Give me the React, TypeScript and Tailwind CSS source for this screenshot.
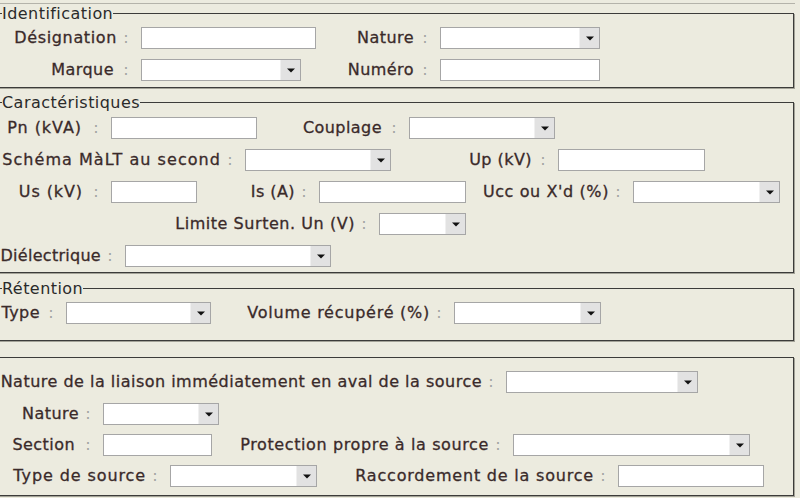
import React from "react";

const FONT = "font-['DejaVu_Sans',sans-serif] text-[16px] tracking-[0.45px]";

function Label({ w, text, t = "", g = "ml-[6px]" }: { w: string; text: string; t?: string; g?: string }) {
  return (
    <span className={`${w} flex shrink-0 justify-end whitespace-nowrap leading-[22px] text-[#3a2a2a] [-webkit-text-stroke:0.3px_#3a2a2a]`}>
      <span className={t}>{text}</span>
      <span className={`${g} mr-[2px] w-[6px] text-center tracking-normal text-[#a3a3a3] [-webkit-text-stroke:0px]`}>:</span>
    </span>
  );
}

function Input({ w }: { w: string }) {
  return <div className={`${w} ml-[10px] h-[22px] shrink-0 border border-[#a6a6a6] bg-white`} />;
}

function Select({ w }: { w: string }) {
  return (
    <div className={`${w} ml-[10px] flex h-[22px] shrink-0 border border-[#a6a6a6] bg-white`}>
      <div className="flex-1" />
      <div className="flex w-[20px] items-center justify-center border-l border-[#f0f0f0] bg-[#e2e2e2]">
        <svg width="8" height="5" viewBox="0 0 8 5">
          <path d="M0 0.5h8L4 4.5z" fill="#111" />
        </svg>
      </div>
    </div>
  );
}

function Row({ children, className = "" }: { children: React.ReactNode; className?: string }) {
  return <div className={`flex h-[22px] items-center ${className}`}>{children}</div>;
}

const LEGEND = "p-0 leading-[17px] text-[#2a2a2a]";
const FS = "-ml-[4px] w-[798px] border border-[#3c3c3a] pl-[5px] shadow-[1px_1px_0_#a4a398]";

export default function App() {
  return (
    <div className={`h-[498px] w-[800px] overflow-hidden bg-[#ecebdf] pt-[3px] ${FONT}`}>
      <div className="h-[1px] w-[795px] bg-[#b4b3aa]" />

      {/* Identification */}
      <fieldset className={`${FS} mt-[1px] pb-[6px]`}>
        <legend className={LEGEND}>Identification</legend>
        <div className="-ml-[2px] flex flex-col gap-[10px] pt-[5px]">
          <Row>
            <Label w="w-[131px]" text="Désignation" t="tracking-[0.63px]" />
            <Input w="w-[175px]" />
            <Label w="w-[114px]" text="Nature" g="ml-[8px]" />
            <Select w="w-[160px]" />
          </Row>
          <Row>
            <Label w="w-[131px]" text="Marque" g="ml-[9px]" />
            <Select w="w-[160px]" />
            <Label w="w-[129px]" text="Numéro" g="ml-[8px]" />
            <Input w="w-[160px]" />
          </Row>
        </div>
      </fieldset>

      {/* Caractéristiques */}
      <fieldset className={`${FS} mt-[6px] pb-[5px]`}>
        <legend className={LEGEND}>Caractéristiques</legend>
        <div className="-ml-[2px] flex flex-col gap-[10px] pt-[6px]">
          <Row>
            <Label w="w-[101px]" text="Pn (kVA)" t="tracking-[0.95px]" g="ml-[11px]" />
            <Input w="w-[146px]" />
            <Label w="w-[142px]" text="Couplage" g="ml-[9px]" />
            <Select w="w-[146px]" />
          </Row>
          <Row>
            <Label w="w-[235px]" text="Schéma MàLT au second" t="tracking-[1.05px]" />
            <Select w="w-[146px]" />
            <Label w="w-[157px]" text="Up (kV)" g="ml-[8px]" />
            <Input w="w-[147px]" />
          </Row>
          <Row>
            <Label w="w-[101px]" text="Us (kV)" t="tracking-[0.9px]" g="ml-[10px]" />
            <Input w="w-[86px]" />
            <Label w="w-[112px]" text="Is (A)" />
            <Input w="w-[147px]" />
            <Label w="w-[157px]" text="Ucc ou X'd (%)" t="tracking-[0.6px]" />
            <Select w="w-[147px]" />
          </Row>
          <Row>
            <Label w="w-[369px]" text="Limite Surten. Un (V)" t="tracking-[0.55px]" />
            <Select w="w-[87px]" />
          </Row>
          <Row>
            <Label w="w-[115px]" text="Diélectrique" t="tracking-[0.28px]" />
            <Select w="w-[206px]" />
          </Row>
        </div>
      </fieldset>

      {/* Rétention */}
      <fieldset className={`${FS} mt-[7px] pb-[16px]`}>
        <legend className={LEGEND}>Rétention</legend>
        <div className="-ml-[2px] flex flex-col pt-[5px]">
          <Row>
            <Label w="w-[56px]" text="Type" g="ml-[8px]" />
            <Select w="w-[145px]" />
            <Label w="w-[233px]" text="Volume récupéré (%)" t="tracking-[0.75px]" />
            <Select w="w-[147px]" />
          </Row>
        </div>
      </fieldset>

      {/* Source */}
      <div className={`${FS} mt-[16px] pb-[8px] pt-[13px]`}>
        <div className="-ml-[2px] flex flex-col gap-[9px]">
          <Row>
            <Label w="w-[496px]" text="Nature de la liaison immédiatement en aval de la source" t="tracking-[0.49px]" />
            <Select w="w-[192px]" />
          </Row>
          <Row className="mt-[1px]">
            <Label w="w-[93px]" text="Nature" />
            <Select w="w-[116px]" />
          </Row>
          <Row>
            <Label w="w-[93px]" text="Section" g="ml-[10px]" />
            <Input w="w-[109px]" />
            <Label w="w-[291px]" text="Protection propre à la source" t="tracking-[0.62px]" />
            <Select w="w-[237px]" />
          </Row>
          <Row>
            <Label w="w-[160px]" text="Type de source" t="tracking-[0.9px]" />
            <Select w="w-[147px]" />
            <Label w="w-[291px]" text="Raccordement de la source" t="tracking-[0.8px]" />
            <Input w="w-[146px]" />
          </Row>
        </div>
      </div>
    </div>
  );
}
